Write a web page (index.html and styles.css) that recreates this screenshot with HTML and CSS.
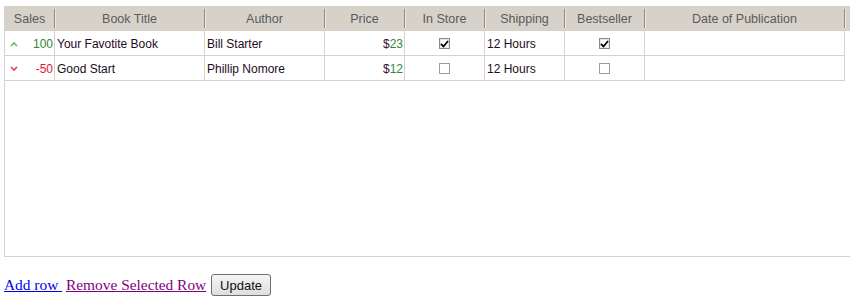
FILE: index.html
```html
<!DOCTYPE html>
<html lang="en">
<head>
  <meta charset="UTF-8" />
  <title>Books Grid</title>
  <link rel="stylesheet" href="styles.css">
</head>
<body>
  <div class="grid">
    <div class="grid-head">
      <div class="hcell"><span>Sales</span></div>
      <div class="hcell"><span>Book Title</span></div>
      <div class="hcell"><span>Author</span></div>
      <div class="hcell"><span>Price</span></div>
      <div class="hcell"><span>In Store</span></div>
      <div class="hcell"><span>Shipping</span></div>
      <div class="hcell"><span>Bestseller</span></div>
      <div class="hcell"><span>Date of Publication</span></div>
    </div>

    <div class="grid-row">
      <div class="cell sales up">
        <svg class="trend" width="8" height="6" viewBox="0 0 8 6"><path d="M1 5 L4 2 L7 5" fill="none" stroke="#5cc45c" stroke-width="1.6"/></svg>
        <span>100</span>
      </div>
      <div class="cell">Your Favotite Book</div>
      <div class="cell">Bill Starter</div>
      <div class="cell price"><span class="cur">$</span>23</div>
      <div class="cell center"><span class="check on"><svg width="9" height="8" viewBox="0 0 9 8"><path d="M1 4 L3.5 6.5 L8 1" fill="none" stroke="#000" stroke-width="1.8"/></svg></span></div>
      <div class="cell">12 Hours</div>
      <div class="cell center"><span class="check on"><svg width="9" height="8" viewBox="0 0 9 8"><path d="M1 4 L3.5 6.5 L8 1" fill="none" stroke="#000" stroke-width="1.8"/></svg></span></div>
      <div class="cell"></div>
    </div>

    <div class="grid-row">
      <div class="cell sales down">
        <svg class="trend" width="8" height="6" viewBox="0 0 8 6"><path d="M1 1 L4 4 L7 1" fill="none" stroke="#e04050" stroke-width="1.6"/></svg>
        <span>-50</span>
      </div>
      <div class="cell">Good Start</div>
      <div class="cell">Phillip Nomore</div>
      <div class="cell price"><span class="cur">$</span>12</div>
      <div class="cell center"><span class="check"></span></div>
      <div class="cell">12 Hours</div>
      <div class="cell center"><span class="check"></span></div>
      <div class="cell"></div>
    </div>
  </div>

  <div class="controls">
    <a href="#" class="add">Add row&nbsp;</a> <a href="#" class="remove">Remove Selected Row</a>
    <button class="update">Update</button>
  </div>
</body>
</html>
```

FILE: styles.css
```css
:root {
  --head-bg: #d6d2ca;
  --head-text: #5a5a5a;
  --line: #d2d2d2;
  --text: #1e0c22;
  --green: #2f8a2f;
  --red: #d8203a;
}

html {
  overflow: hidden;
}

body {
  margin: 0;
  padding: 6px 0 0 4px;
  font-family: "Liberation Sans", Arial, sans-serif;
  background: #fff;
}

/* Grid */
.grid {
  width: 848px;
  height: 251px;
  box-sizing: border-box;
  border: 1px solid var(--line);
  border-top: none;
  font-size: 12px;
  color: var(--text);
}

.grid-head,
.grid-row {
  display: grid;
  grid-template-columns: 50px 150px 120px 80px 80px 80px 80px 200px;
}

.grid-head {
  background: var(--head-bg);
  height: 25px;
  margin-left: -1px;
  padding-left: 1px;
  width: 849px;
}

.hcell {
  padding: 3px 0;
  box-sizing: border-box;
  height: 25px;
}
.hcell span {
  display: block;
  height: 19px;
  box-sizing: border-box;
  padding-top: 1px;
  line-height: 18px;
  font-size: 12.5px;
  text-align: center;
  color: var(--head-text);
  border-right: 1px solid #8c8a86;
  box-shadow: 1px 0 0 #ebe9e5;
}

.grid-row .cell {
  height: 25px;
  box-sizing: border-box;
  border-right: 1px solid var(--line);
  border-bottom: 1px solid var(--line);
  line-height: 24px;
  padding: 1px 2px 0;
  white-space: nowrap;
  overflow: hidden;
}

.cell.sales {
  display: flex;
  align-items: center;
  justify-content: space-between;
  padding: 1px 1px 0 5px;
}
.cell.sales.up { color: var(--green); }
.cell.sales.down { color: var(--red); }

.cell.price {
  text-align: right;
  color: var(--green);
  padding-right: 1px;
}
.cell.price .cur { color: #3a1030; }

.cell.center {
  display: flex;
  align-items: center;
  justify-content: center;
}

.check {
  width: 11px;
  height: 11px;
  box-sizing: border-box;
  border: 1px solid #9c9c9c;
  background: #fff;
  display: flex;
  align-items: center;
  justify-content: center;
}
.check.on {
  border-color: #8a8a8a;
  box-shadow: inset 0 0 0 1px #e8e8e8;
}

/* Controls below the grid */
.controls {
  margin-top: 17px;
  font-family: "Liberation Serif", "Times New Roman", serif;
  font-size: 15.4px;
}
.controls a.add { color: #0000ee; }
.controls a.remove { color: #800080; }

.update {
  font-family: "Liberation Sans", Arial, sans-serif;
  font-size: 13px;
  height: 22px;
  padding: 0 8px;
  margin-left: 1px;
  border: 1px solid #6f6f6f;
  border-radius: 3px;
  background: linear-gradient(#f6f6f6, #dedede);
  color: #111;
}
```
